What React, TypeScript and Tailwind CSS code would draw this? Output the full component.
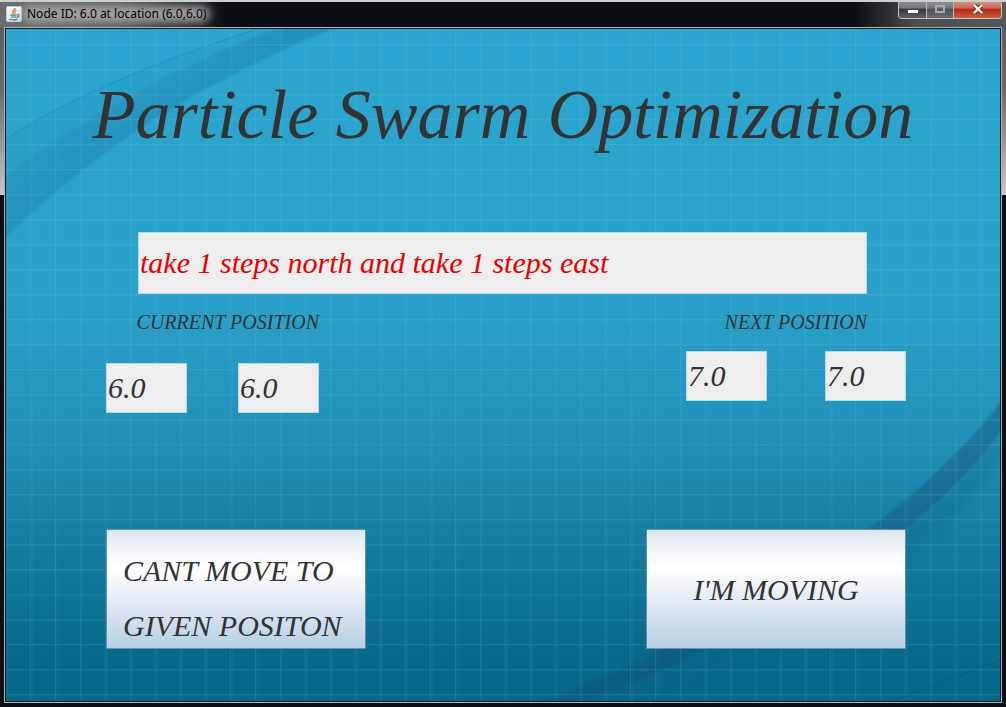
import type { ReactNode } from "react";

function JavaIcon() {
  return (
    <svg viewBox="0 0 16 16" className="size-4 shrink-0" aria-hidden="true">
      <defs>
        <linearGradient id="tile" x1="0" y1="0" x2="0" y2="1">
          <stop offset="0" stopColor="#ffffff" />
          <stop offset="1" stopColor="#d5dfe8" />
        </linearGradient>
      </defs>
      <rect x="0.5" y="0.5" width="15" height="15" rx="1" fill="url(#tile)" stroke="#c3ced8" />
      <path d="M9 2C9.6 4.2 5.2 4.6 7.6 8" fill="none" stroke="#e5823c" strokeWidth="1.6" />
      <path d="M10.6 4.3C8.4 5.2 8.6 6 9 8" fill="none" stroke="#e5823c" strokeWidth="1.2" />
      <path d="M4.2 9.2h6.4M5 11h5.2M3.2 13.2c2.6.9 6.4.8 8.4-.1" fill="none" stroke="#4b7594" strokeWidth="1.2" />
      <path d="M11 8.6c2.8-.4 2.4 2.2-.4 2.8" fill="none" stroke="#4b7594" strokeWidth="1.1" />
    </svg>
  );
}

function TitleBar() {
  return (
    <header className="relative flex h-[27px] items-start justify-between overflow-hidden border-t-2 border-[#c9d1d1] bg-[linear-gradient(to_right,#6b6e6f_0,#5a5d5e_120px,#0a0f13_224px,#0a0f13_calc(100%_-_150px),#4b4e50_calc(100%_-_90px),#55585a_100%)]">
      <div className="flex h-6 items-center gap-1 pl-[6px]">
        <JavaIcon />
        <div className="relative">
          <div className="absolute -inset-x-1 inset-y-0 rounded-full bg-[#aaaaaa] opacity-90 blur-[4px]" />
          <h1 className="relative pl-px font-['Noto_Sans','Open_Sans',sans-serif] text-[12px] leading-4 whitespace-nowrap text-black">
            Node ID: 6.0 at location (6.0,6.0)
          </h1>
        </div>
      </div>
      <div className="relative -mt-0.5 mr-1 flex h-[19px] overflow-hidden rounded-b-[4px] border border-t-0 border-[#c2c4c5]">
        <button
          type="button"
          aria-label="Minimize"
          className="flex w-7 items-center justify-center border-r border-[#b5b7b8] bg-[linear-gradient(#909395_0,#74777a_45%,#34383b_50%,#5d6164_100%)]"
        >
          <svg viewBox="0 0 12 12" className="mt-0.5 size-3" aria-hidden="true">
            <rect x="0.5" y="5.5" width="11" height="4" rx="0.5" fill="#fff" stroke="#45494c" />
          </svg>
        </button>
        <button
          type="button"
          aria-label="Maximize"
          className="flex w-[27px] items-center justify-center border-r border-[#b5b7b8] bg-[linear-gradient(#909395_0,#787b7e_45%,#4e5255_50%,#696d70_100%)]"
        >
          <svg viewBox="0 0 12 12" className="size-3" aria-hidden="true">
            <rect x="2" y="3" width="8" height="6" fill="none" stroke="#a7abad" strokeWidth="2" />
          </svg>
        </button>
        <button
          type="button"
          aria-label="Close"
          className="flex w-[47px] items-center justify-center bg-[linear-gradient(#dd9a8b_0,#cb6a55_45%,#b02c15_50%,#cc5c3e_100%)]"
        >
          <svg viewBox="0 0 12 12" className="size-3" aria-hidden="true">
            <path d="M2.5 2.5l7 7M9.5 2.5l-7 7" stroke="#5d3430" strokeWidth="4.4" />
            <path d="M2 2l8 8M10 2l-8 8" stroke="#fff" strokeWidth="2.4" />
          </svg>
        </button>
      </div>
    </header>
  );
}

function Backdrop() {
  return (
    <svg
      viewBox="0 0 994 672"
      preserveAspectRatio="none"
      className="absolute inset-0 size-full"
      aria-hidden="true"
    >
      <defs>
        <linearGradient id="sea" x1="0" y1="0" x2="0" y2="1">
          <stop offset="0" stopColor="#2ba5cf" />
          <stop offset="0.4" stopColor="#2aa1ca" />
          <stop offset="0.6" stopColor="#2191b9" />
          <stop offset="0.8" stopColor="#13789b" />
          <stop offset="0.93" stopColor="#076a8b" />
          <stop offset="1" stopColor="#066887" />
        </linearGradient>
        <linearGradient id="sweep" gradientUnits="userSpaceOnUse" x1="92" y1="70" x2="128" y2="118">
          <stop offset="0" stopColor="#1c7fa8" stopOpacity="0.3" />
          <stop offset="1" stopColor="#1c7fa8" stopOpacity="0.45" />
        </linearGradient>
        <pattern id="grid" width="25" height="25" x="24" y="15" patternUnits="userSpaceOnUse">
          <path d="M0 .5h25M.5 0v25" stroke="#7fd6f0" strokeOpacity="0.13" />
          <path d="M0 1.5h25M2.5 0v25" stroke="#7fd6f0" strokeOpacity="0.05" />
        </pattern>
        <filter id="soft">
          <feGaussianBlur stdDeviation="1" />
        </filter>
        <filter id="shade">
          <feGaussianBlur stdDeviation="7" />
        </filter>
      </defs>
      <rect width="994" height="672" fill="url(#sea)" />
      <path d="M0 109Q90 50 251 0H274Q110 60 0 147Z" fill="#1c7fb0" opacity="0.1" />
      <path
        d="M-2 148Q120 55 276 -2H332Q135 75 -2 210Z"
        fill="url(#sweep)"
        filter="url(#soft)"
      />
      <path d="M0 110Q90 52 251 0" fill="none" stroke="#1c86b2" strokeOpacity="0.45" />
      <path
        d="M996 400Q885 545 690 625Q630 650 580 674H620Q880 590 996 430Z"
        fill="#0b5d86"
        opacity="0.3"
        filter="url(#shade)"
      />
      <path
        d="M996 371Q893 508 654 623Q590 652 534 674H574Q640 652 694 621Q900 530 996 401Z"
        fill="#134f75"
        opacity="0.38"
        filter="url(#soft)"
      />
      <path d="M884 673Q945 650 994 631" fill="none" stroke="#07547a" strokeOpacity="0.6" />
      <rect width="994" height="672" fill="url(#grid)" />
    </svg>
  );
}

function Coordinate({ id, label, value }: { id: string; label: string; value: string }) {
  return (
    <input
      id={id}
      aria-label={label}
      readOnly
      value={value}
      className="h-[50px] w-[81px] border border-[#b5dbe9] bg-[#eeeeee] pl-px text-[30px] text-[#333333] italic outline-none"
    />
  );
}

function ActionButton({ children, className }: { children: ReactNode; className: string }) {
  return (
    <button
      type="button"
      className={`flex h-[120px] w-[260px] border border-[#6a8da6] bg-[linear-gradient(#dde6f0_0,#ffffff_30%,#ffffff_33%,#b8cfe5_100%)] text-[30px] leading-[55px] text-[#333333] italic ${className}`}
    >
      {children}
    </button>
  );
}

export default function App() {
  return (
    <div className="flex min-h-screen flex-col bg-[linear-gradient(to_bottom,#55585a_0,#6a6c6d_90px,#c6c6c6_195px,#0a1016_195px)] pb-1">
      <TitleBar />
      <div className="mx-1 flex grow border border-[#a9b7ba]">
        <main className="relative grow border border-[#0b1a22] font-['Liberation_Serif','Times_New_Roman',serif]">
          <Backdrop />
          <div className="relative pt-[46px] text-[#333333] italic">
            <h2 className="text-center text-[70px] leading-[80px] whitespace-nowrap">
              Particle Swarm Optimization
            </h2>
            <div className="mt-[77px] pr-[94px] pl-[100px]">
              <div className="pr-[39px] pl-8">
                <input
                  aria-label="Instruction"
                  readOnly
                  value="take 1 steps north and take 1 steps east"
                  className="block h-[62px] w-full border border-[#b5dbe9] bg-[#eeeeee] pl-px text-[30px] text-[#e80000] italic outline-none"
                />
              </div>
              <div className="mt-[14px] flex items-start justify-between">
                <section className="flex flex-col">
                  <label htmlFor="current-x" className="text-right text-[20px] leading-7">
                    CURRENT POSITION
                  </label>
                  <div className="mt-[27px] flex gap-[51px]">
                    <Coordinate id="current-x" label="Current position X" value="6.0" />
                    <Coordinate id="current-y" label="Current position Y" value="6.0" />
                  </div>
                </section>
                <section className="flex flex-col">
                  <label htmlFor="next-x" className="pr-[39px] text-right text-[20px] leading-7">
                    NEXT POSITION
                  </label>
                  <div className="mt-[15px] flex gap-[58px]">
                    <Coordinate id="next-x" label="Next position X" value="7.0" />
                    <Coordinate id="next-y" label="Next position Y" value="7.0" />
                  </div>
                </section>
              </div>
              <div className="mt-[116px] flex justify-between pb-[52px]">
                <ActionButton className="items-start justify-start pt-[13px] pl-4 text-left">
                  <span>
                    CANT MOVE TO
                    <br />
                    GIVEN POSITON
                  </span>
                </ActionButton>
                <ActionButton className="items-center justify-center">I'M MOVING</ActionButton>
              </div>
            </div>
          </div>
        </main>
      </div>
    </div>
  );
}
